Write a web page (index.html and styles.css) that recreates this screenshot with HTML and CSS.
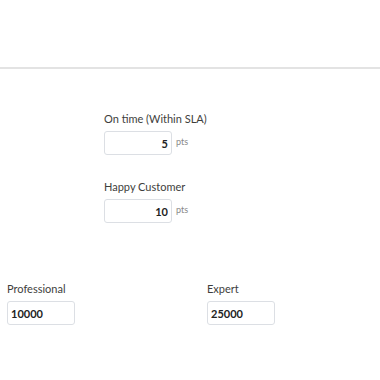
FILE: index.html
```html
<!DOCTYPE html>
<html lang="en">
<head>
    <meta charset="UTF-8">
    <meta name="viewport" content="width=device-width, initial-scale=1.0">
    <title>Points settings</title>
    <link rel="stylesheet" href="styles.css">
</head>
<body>
    <div class="header"></div>

    <div class="points">
        <div class="field">
            <label for="on_time">On time (Within SLA)</label>
            <div class="input-row">
                <input type="text" id="on_time" class="num" value="5">
                <span class="unit">pts</span>
            </div>
        </div>

        <div class="field">
            <label for="happy">Happy Customer</label>
            <div class="input-row">
                <input type="text" id="happy" class="num" value="10">
                <span class="unit">pts</span>
            </div>
        </div>
    </div>

    <div class="tiers">
        <div class="tier">
            <label for="professional">Professional</label>
            <input type="text" id="professional" value="10000">
        </div>
        <div class="tier">
            <label for="expert">Expert</label>
            <input type="text" id="expert" value="25000">
        </div>
    </div>
</body>
</html>
```

FILE: styles.css
```css
body {
    margin: 0;
    font-family: Lato, "Open Sans", sans-serif;
    color: #3e3e3c;
    background: #fff;
}
.header {
    height: 67px;
    border-bottom: 2px solid #e3e3e3;
}
.points {
    padding: 43px 0 0 104px;
}
.field {
    margin-bottom: 25px;
}
label {
    display: block;
    font-size: 11px;
    line-height: 14px;
    margin-bottom: 5px;
}
.input-row {
    display: flex;
    align-items: center;
}
input {
    width: 68px;
    height: 24px;
    box-sizing: border-box;
    border: 1px solid #dcdfe4;
    border-radius: 3px;
    padding: 0 3px;
    font-family: Lato, "Open Sans", sans-serif;
    font-size: 11px;
    font-weight: bold;
    color: #222;
}
input.num {
    text-align: right;
}
.unit {
    font-size: 9px;
    color: #888;
    margin: -4px 0 0 4px;
}
.tiers {
    display: grid;
    grid-template-columns: 200px 1fr;
    margin-top: 59px;
    padding-left: 7px;
}
```
